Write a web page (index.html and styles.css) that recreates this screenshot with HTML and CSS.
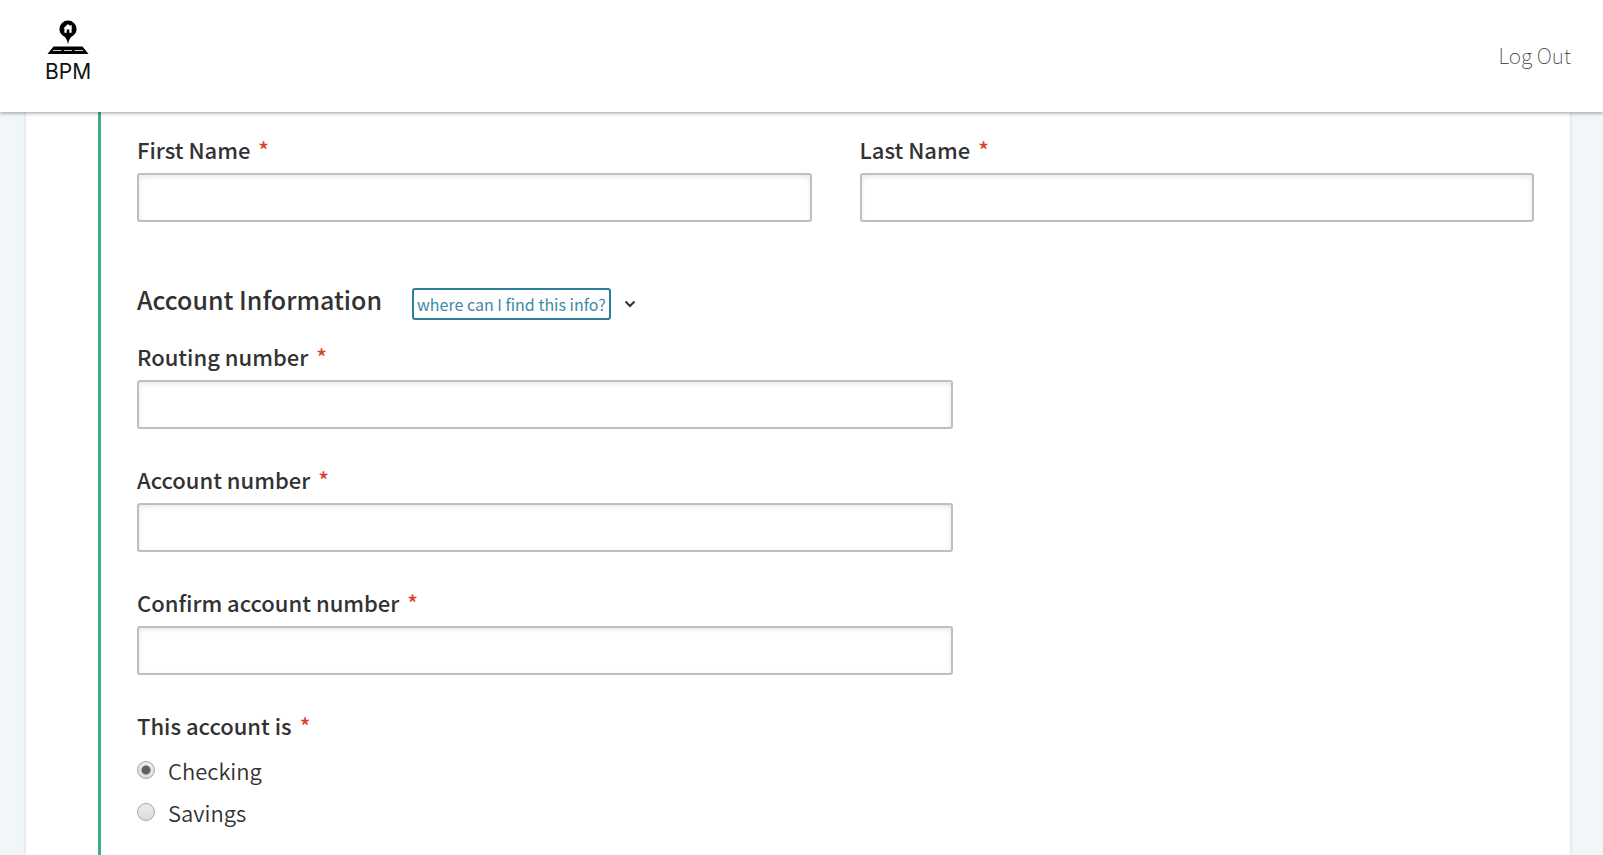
FILE: index.html
```html
<!DOCTYPE html>
<html lang="en">
<head>
<meta charset="utf-8">
<title>BPM – Account Information</title>
<link rel="stylesheet" href="styles.css">
</head>
<body>
<header class="topbar">
  <a class="brand" href="#">
    <svg class="brand-icon" viewBox="0 0 42 36" aria-hidden="true">
      <path d="M21 1.500a8.500 8.500 0 0 0-8.500 8.500c0 4 2.300 6 4.700 7.600c1.900 1.400 2.800 3.400 3.800 7.600c1-4.200 1.900-6.200 3.800-7.600c2.400-1.600 4.700-3.600 4.700-7.600A8.500 8.500 0 0 0 21 1.500z"/>
      <path fill="#fff" d="M21 5l-4.500 4.200h.9v4.600h2.300v-3.300h2.600v3.300h2.300V9.200h.9l-.9-.9V6h-1.300v1.200z"/>
      <path d="M6.500 27.500h29L41.500 35H.5z"/>
      <path stroke="#ccc" stroke-width="1.200" d="M6 31.500h8.500M17 31.500h8M27.500 31.500H36"/>
    </svg>
    <span class="brand-name">BPM</span>
  </a>
  <a class="logout" href="#">Log Out</a>
</header>
<main class="card">
  <form class="section">
    <div class="row">
      <div class="field">
        <label for="first">First Name <span class="req">*</span></label>
        <input class="text" id="first" type="text">
      </div>
      <div class="field">
        <label for="last">Last Name <span class="req">*</span></label>
        <input class="text" id="last" type="text">
      </div>
    </div>
    <div class="heading">
      <h2>Account Information</h2>
      <button class="help" type="button"><span class="help-text">where can I find this info?</span>
        <svg class="chevron" viewBox="0 0 12 8" aria-hidden="true"><path d="M1.500 1.500L6 6l4.500-4.500"/></svg>
      </button>
    </div>
    <div class="narrow">
      <div class="field">
        <label for="routing">Routing number <span class="req">*</span></label>
        <input class="text" id="routing" type="text">
      </div>
      <div class="field">
        <label for="account">Account number <span class="req">*</span></label>
        <input class="text" id="account" type="text">
      </div>
      <div class="field">
        <label for="confirm">Confirm account number <span class="req">*</span></label>
        <input class="text" id="confirm" type="text">
      </div>
      <fieldset class="choices">
        <legend>This account is <span class="req">*</span></legend>
        <label class="choice"><input type="radio" name="type" checked> Checking</label>
        <label class="choice"><input type="radio" name="type"> Savings</label>
      </fieldset>
    </div>
  </form>
</main>
</body>
</html>
```
FILE: styles.css
```css
* { box-sizing: border-box; }

body {
  margin: 0;
  min-height: 100vh;
  display: flex;
  flex-direction: column;
  background: #f1f6f9;
  color: #323232;
  font-family: "Noto Sans CJK SC", "Noto Sans", sans-serif;
  font-size: 22px;
  line-height: 30px;
}

.topbar {
  display: flex;
  align-items: center;
  justify-content: space-between;
  height: 112px;
  padding: 0 32px 0 45px;
  background: #fff;
  box-shadow: 0 1px 4px rgba(0, 0, 0, .4);
  z-index: 1;
}

.brand {
  display: flex;
  flex-direction: column;
  align-items: center;
  padding-bottom: 4px;
  color: #111;
  text-decoration: none;
}

.brand-icon { width: 42px; height: 36px; }

.brand-name {
  font: 400 21px/34px Inter, sans-serif;
}

.logout {
  padding-bottom: 2px;
  color: #323232;
  font-weight: 100;
  font-size: 21px;
  text-decoration: none;
}

.card {
  flex: 1;
  display: flex;
  margin: 0 33px 0 26px;
  padding: 0 36px 0 72px;
  background: #fff;
  box-shadow: 0 0 4px rgba(0, 0, 0, .12);
}

.section {
  flex: 1;
  padding: 22px 0 8px 36px;
  border-left: 3px solid #3fae85;
}

.row {
  display: grid;
  grid-template-columns: 1fr 1fr;
  gap: 48px;
}

.field {
  display: flex;
  flex-direction: column;
  gap: 9px;
}

.field label,
.choices legend {
  padding: 0;
  font-weight: 500;
}

.req {
  margin-left: 3px;
  color: #dd3f2f;
}

.text {
  width: 100%;
  height: 49px;
  padding: 0 12px;
  border: 2px solid #bfbfbf;
  border-radius: 3px;
  background: #fff;
  box-shadow: inset 0 2px 5px rgba(0, 0, 0, .09);
  font: inherit;
}

.heading {
  display: flex;
  align-items: flex-start;
  gap: 30px;
  margin: 62px 0 21px;
}

.heading h2 {
  margin: 0;
  font-size: 25px;
  line-height: 30px;
  font-weight: 500;
}

.help {
  display: flex;
  align-items: center;
  gap: 13px;
  padding: 4px 0 0;
  border: 0;
  background: none;
  font: inherit;
}

.help-text {
  padding: 0 3px;
  border: 2px solid #2e7d9b;
  border-radius: 3px;
  color: #3b8aa8;
  font-size: 16px;
  line-height: 28px;
}

.chevron {
  width: 12px;
  height: 8px;
  fill: none;
  stroke: #323232;
  stroke-width: 2;
}

.narrow {
  display: flex;
  flex-direction: column;
  gap: 35px;
  width: 58.4%;
}

.choices {
  margin: 0;
  padding: 3px 0 0;
  border: 0;
}

.choice {
  display: flex;
  align-items: center;
  gap: 13px;
  margin-top: 12px;
  font-weight: 350;
}

.choice input {
  appearance: none;
  width: 18px;
  height: 18px;
  margin: 0;
  border: 1px solid #a6a6a6;
  border-radius: 50%;
  background: linear-gradient(#ececec, #dcdcdc);
}

.choice input:checked {
  background: radial-gradient(circle, #606060 4px, transparent 5px), linear-gradient(#ececec, #dcdcdc);
}
```
